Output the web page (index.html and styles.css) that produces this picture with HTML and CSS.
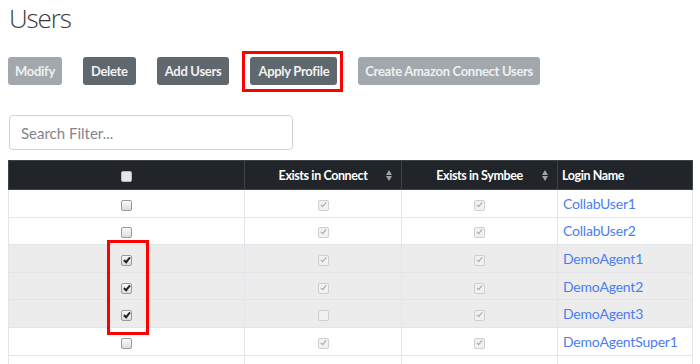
FILE: index.html
```html
<!DOCTYPE html>
<html lang="en">
<head>
  <meta charset="UTF-8" />
  <title>Users</title>
  <link rel="stylesheet" href="styles.css">
</head>
<body>
  <h1 class="page-title">Users</h1>

  <div class="toolbar">
    <button class="btn btn-disabled">Modify</button>
    <button class="btn">Delete</button>
    <button class="btn">Add Users</button>
    <span class="marked"><button class="btn">Apply Profile</button></span>
    <button class="btn btn-disabled">Create Amazon Connect Users</button>
  </div>

  <input class="search" type="text" placeholder="Search Filter..." />

  <div class="table-wrap">
    <table class="users">
      <thead>
        <tr>
          <th class="col-select"><span class="cb cb-head"></span></th>
          <th class="col-connect sortable">Exists in Connect<span class="sort"></span></th>
          <th class="col-symbee sortable">Exists in Symbee<span class="sort"></span></th>
          <th class="col-login">Login Name</th>
        </tr>
      </thead>
      <tbody>
        <tr>
          <td><span class="cb"></span></td>
          <td><span class="cb cb-off on"></span></td>
          <td><span class="cb cb-off on"></span></td>
          <td><a href="#">CollabUser1</a></td>
        </tr>
        <tr>
          <td><span class="cb"></span></td>
          <td><span class="cb cb-off on"></span></td>
          <td><span class="cb cb-off on"></span></td>
          <td><a href="#">CollabUser2</a></td>
        </tr>
        <tr class="selected">
          <td><span class="cb on"></span></td>
          <td><span class="cb cb-off on"></span></td>
          <td><span class="cb cb-off on"></span></td>
          <td><a href="#">DemoAgent1</a></td>
        </tr>
        <tr class="selected">
          <td><span class="cb on"></span></td>
          <td><span class="cb cb-off on"></span></td>
          <td><span class="cb cb-off on"></span></td>
          <td><a href="#">DemoAgent2</a></td>
        </tr>
        <tr class="selected">
          <td><span class="cb on"></span></td>
          <td><span class="cb cb-off"></span></td>
          <td><span class="cb cb-off on"></span></td>
          <td><a href="#">DemoAgent3</a></td>
        </tr>
        <tr>
          <td><span class="cb"></span></td>
          <td><span class="cb cb-off on"></span></td>
          <td><span class="cb cb-off on"></span></td>
          <td><a href="#">DemoAgentSuper1</a></td>
        </tr>
        <tr>
          <td></td>
          <td></td>
          <td></td>
          <td></td>
        </tr>
      </tbody>
    </table>
    <div class="mark-box"></div>
  </div>
</body>
</html>
```

FILE: styles.css
```css
body {
  margin: 0;
  padding: 0 7px 0 8px;
  font-family: 'Lato', 'Open Sans', sans-serif;
  color: #333;
  background: #fff;
  overflow: hidden;
}

.page-title {
  margin: 0;
  padding: 0 0 0 1px;
  height: 57px;
  font-family: 'Open Sans', sans-serif;
  font-weight: 300;
  font-size: 26px;
  line-height: 36px;
  color: #3a3a3a;
  letter-spacing: -1.1px;
}

.toolbar {
  display: flex;
  gap: 21px;
  height: 28px;
  margin-bottom: 30px;
}

.btn {
  height: 28px;
  padding: 0 8px;
  border: none;
  border-radius: 3px;
  background: #5f676f;
  color: #f2f2f2;
  font-family: 'Lato', sans-serif;
  font-weight: bold;
  font-size: 13px;
  letter-spacing: -0.3px;
}

.btn-disabled {
  background: #a3a8ae;
  color: #eef0f2;
  padding: 0 7px;
}

.marked {
  display: flex;
  margin: -6px -6px -7px -8px;
  padding: 3px 3px 4px 5px;
  border: 3px solid #f00;
}

.search {
  display: block;
  box-sizing: border-box;
  width: 284px;
  height: 35px;
  margin: 0 0 10px 1px;
  padding: 0 11px;
  border: 1px solid #cfd3d7;
  border-radius: 4px;
  font-family: 'Lato', sans-serif;
  font-size: 15px;
  color: #555;
}

.search::placeholder {
  color: #80858a;
}

.table-wrap {
  position: relative;
  width: 685px;
}

.users {
  width: 685px;
  border-collapse: collapse;
  table-layout: fixed;
  font-size: 14px;
}

.users th {
  height: 29px;
  padding: 0 4px;
  background: #212529;
  color: #fff;
  font-size: 12.5px;
  font-weight: bold;
  letter-spacing: -0.4px;
  text-align: center;
  border: 1px solid #3d4349;
  box-sizing: border-box;
}

.col-select { width: 236px; }
.col-connect { width: 157px; }
.col-symbee { width: 156px; }
.users th.col-login { text-align: left; }

.sortable {
  position: relative;
}

.sort {
  position: absolute;
  right: 8px;
  top: 9px;
  width: 7px;
  height: 11px;
}

.sort::before,
.sort::after {
  content: '';
  position: absolute;
  left: 0;
  border-left: 3.5px solid transparent;
  border-right: 3.5px solid transparent;
}

.sort::before {
  top: 0;
  border-bottom: 5px solid #9ea3a8;
}

.sort::after {
  bottom: 0;
  border-top: 5px solid #9ea3a8;
}

.users td {
  height: 27.6px;
  padding: 0 4px;
  border: 1px solid #e2e5e9;
  box-sizing: border-box;
  text-align: center;
}

.users td:last-child {
  text-align: left;
  padding-left: 5px;
}

.users tr.selected td {
  background: #ececec;
}

.users a {
  color: #4a7ef0;
  text-decoration: none;
  letter-spacing: -0.2px;
}

.cb {
  display: inline-block;
  position: relative;
  width: 9px;
  height: 9px;
  border: 1px solid #9a9a9a;
  border-radius: 2px;
  background: linear-gradient(#fafafa, #dcdcdc);
  vertical-align: middle;
}

.cb-head {
  background: #e6e6e6;
  border-color: #bbb;
}

.cb-off {
  border-color: #cfcfcf;
  background: #f1f1f1;
}

.cb.on::after {
  content: '';
  position: absolute;
  left: 3px;
  top: 0;
  width: 2px;
  height: 5px;
  border: solid #222;
  border-width: 0 2px 2px 0;
  transform: rotate(40deg);
}

.cb-off.on::after {
  border-color: #a5a5a5;
  border-width: 0 1px 1px 0;
}

.mark-box {
  position: absolute;
  left: 99px;
  top: 80px;
  width: 42px;
  height: 95px;
  box-sizing: border-box;
  border: 3px solid #f00;
}
```
